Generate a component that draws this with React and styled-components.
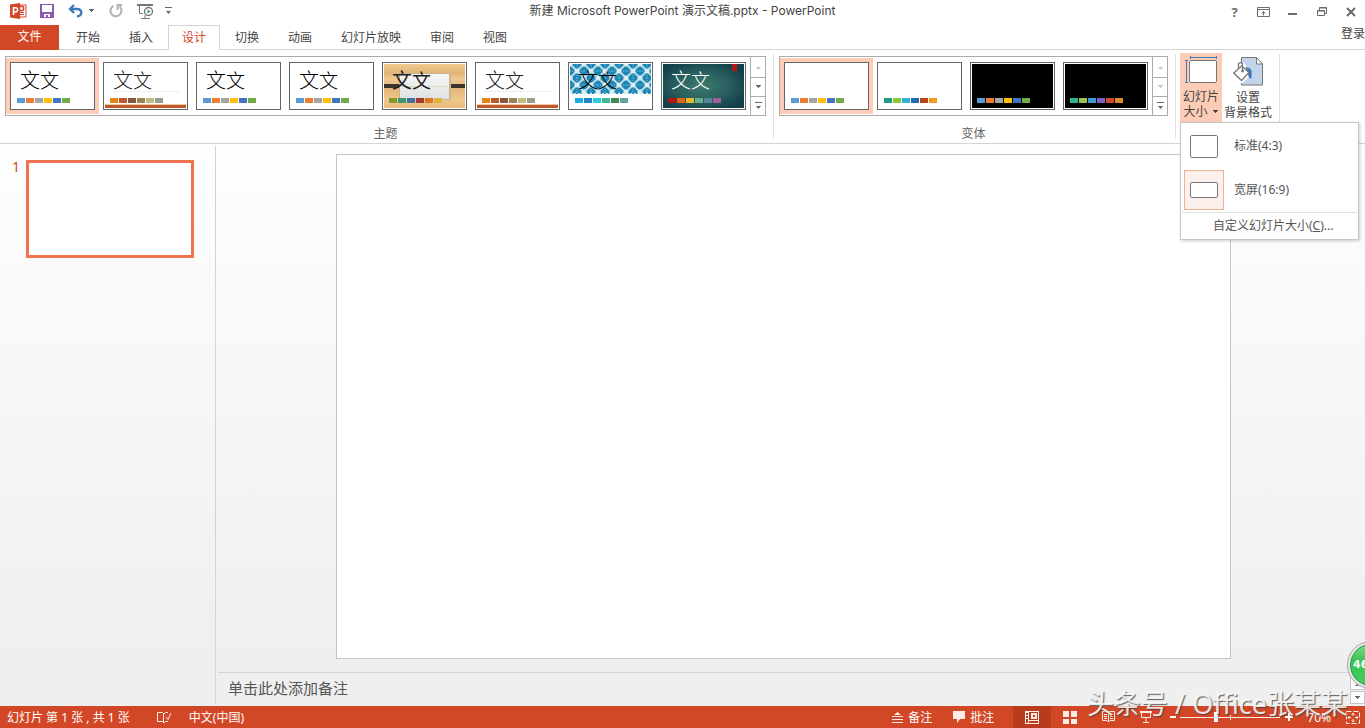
import React from "react";
import styled, { createGlobalStyle, css } from "styled-components";

const Global = createGlobalStyle`
  * { box-sizing: border-box; }
  html, body { margin: 0; overflow: hidden; background: #fff; }
  body, button, input, textarea {
    font-family: "Noto Sans", "Noto Sans CJK SC", sans-serif;
    font-size: 12px;
    color: #444;
  }
  button {
    border: 0;
    padding: 0;
    margin: 0;
    background: none;
    white-space: nowrap;
  }
  svg { display: block; flex: none; }
`;

const accent = "#d24726";
const peach = "#fcccb6";

const Window = styled.div`
  position: relative;
  display: flex;
  flex-direction: column;
  height: 100vh;
  overflow: hidden;
  background: #fff;
`;

/* ---------- title bar ---------- */

const TitleBar = styled.header`
  display: grid;
  grid-template-columns: 1fr auto 1fr;
  align-items: start;
  height: 25px;
`;

const QuickAccess = styled.div`
  display: flex;
  align-items: center;
  height: 22px;
  padding-left: 10px;
`;

const QuickButton = styled.button`
  display: flex;
  align-items: center;
  margin-right: ${(p) => p.$gap || 14}px;
  color: #666;
`;

const WindowTitle = styled.h1`
  margin: 0;
  font-family: Inter, "Noto Sans CJK SC", sans-serif;
  font-size: 12px;
  font-weight: 400;
  line-height: 22px;
  white-space: nowrap;
`;

const WindowControls = styled.div`
  display: flex;
  justify-content: flex-end;
`;

const ControlButton = styled.button`
  display: flex;
  align-items: center;
  justify-content: center;
  width: 29px;
  height: 23px;
  color: #6a6a6a;
  font-size: 13px;
  font-weight: 700;
`;

/* ---------- tabs ---------- */

const TabBar = styled.nav`
  display: flex;
  height: 25px;
  gap: 1px;
  box-shadow: inset 0 -1px 0 #d4d4d4;
`;

const FileTab = styled.button`
  width: 59px;
  margin-right: 2px;
  padding-bottom: 3px;
  background: ${accent};
  color: #fff;
`;

const Tab = styled.button`
  padding: 0 13px 3px;
  border: 1px solid transparent;
  border-bottom: 0;
  ${(p) =>
    p.$active &&
    css`
      color: ${accent};
      background: #fff;
      border-color: #d4d4d4;
    `}
`;

const SignIn = styled.a`
  margin-left: auto;
  color: #444;
  text-decoration: none;
  line-height: 17px;
`;

/* ---------- ribbon ---------- */

const Ribbon = styled.section`
  display: flex;
  height: 94px;
  border-bottom: 1px solid #d4d4d4;
  background: #fff;
`;

const Group = styled.div`
  display: flex;
  flex-direction: column;
  align-items: center;
  margin: 4px 0;
  padding: 2px 7px 0 5px;
  border-right: 1px solid #e1e1e1;
`;

const GroupLabel = styled.span`
  margin-top: auto;
  color: #666;
  line-height: 10px;
`;

const Gallery = styled.div`
  display: flex;
  height: 60px;
  border: 1px solid #ababab;
`;

const GalleryCell = styled.button`
  width: 93px;
  height: 56px;
  margin: 1px 0;
  padding: 4px;
  background: ${(p) => (p.$selected ? peach : "transparent")};
`;

const Thumb = styled.span`
  display: block;
  width: 85px;
  height: 48px;
  padding: 1px;
  border: 1px solid #666;
  background: #fff;
`;

const Art = styled.span`
  position: relative;
  display: block;
  width: 81px;
  height: 44px;
  background: ${(p) => p.$bg || "#fff"};
`;

const ArtDrawing = styled.svg`
  position: absolute;
  inset: 0;
`;

const Sample = styled.span`
  position: relative;
  display: block;
  height: 34px;
  padding-left: 8px;
  text-align: left;
  font: ${(p) => (p.$heavy ? 400 : 300)} 20px/32px "Noto Sans CJK SC", sans-serif;
  color: ${(p) => p.$ink || "#000"};
  small { font-size: 19px; }
`;

const Swatches = styled.span`
  position: relative;
  display: flex;
  gap: 1px;
  padding-left: 5px;
`;

const Swatch = styled.span`
  width: 8px;
  height: 5px;
  background: ${(p) => p.$color};
`;

const Scroller = styled.div`
  display: grid;
  grid-template-rows: 20px 18px 18px;
  row-gap: 1px;
  width: 15px;
  border-left: 1px solid #ababab;
  background: #ababab;
`;

const ScrollButton = styled.button`
  display: flex;
  align-items: center;
  justify-content: center;
  background: #fff;
  color: ${(p) => (p.$dim ? "#c4c4c4" : "#666")};
`;

const Commands = styled.div`
  display: flex;
  margin: 4px 0;
  padding: 0 6px 0 4px;
  gap: 1px;
  border-right: 1px solid #e1e1e1;
`;

const MenuAnchor = styled.div`
  position: relative;
  margin-top: -1px;
`;

const Command = styled.button`
  display: flex;
  flex-direction: column;
  align-items: center;
  width: ${(p) => p.$width}px;
  height: 69px;
  padding-top: 3px;
  background: ${(p) => (p.$open ? peach : "transparent")};
  line-height: 15px;
`;

const CommandIcon = styled.span`
  height: 33px;
`;

const CommandLine = styled.span`
  display: flex;
  align-items: center;
  gap: 4px;
`;

const Menu = styled.div`
  position: absolute;
  top: 69px;
  left: 0;
  z-index: 5;
  width: 179px;
  padding: 3px 0 0;
  background: #fff;
  border: 1px solid #c6c6c6;
  box-shadow: 1px 1px 3px rgba(0, 0, 0, 0.2);
`;

const MenuItem = styled.button`
  display: flex;
  align-items: center;
  gap: 10px;
  width: 100%;
  height: 40px;
  margin-bottom: ${(p) => (p.$last ? 2 : 4)}px;
  padding-left: 3px;
  color: #555;
`;

const MenuIcon = styled.span`
  display: flex;
  align-items: center;
  justify-content: center;
  width: 40px;
  height: 40px;
  border: 1px solid ${(p) => (p.$selected ? "#f5b195" : "transparent")};
  background: ${(p) => (p.$selected ? "#fcf0ec" : "transparent")};
`;

const MenuLabel = styled.span`
  padding-bottom: 2px;
`;

const RatioBox = styled.span`
  width: 28px;
  height: ${(p) => p.$height}px;
  border: 1px solid #777;
  border-radius: 2px;
  background: #fff;
`;

const CustomItem = styled.button`
  display: block;
  width: calc(100% - 2px);
  height: 27px;
  margin: 0 1px;
  padding: 0 0 2px 31px;
  border-top: 1px solid #e1e1e1;
  color: #555;
  text-align: left;
`;

/* ---------- work area ---------- */

const Workspace = styled.main`
  display: flex;
  flex: 1;
  min-height: 0;
  background: linear-gradient(#fefefe, #efefef 90%);
`;

const Outline = styled.aside`
  display: flex;
  align-items: flex-start;
  width: 216px;
  margin: 2px 0;
  padding: 14px 0 0 12px;
  border-right: 1px solid #d4d4d4;
`;

const SlideNumber = styled.span`
  width: 14px;
  color: ${accent};
  font: 14px/14px "Noto Sans", sans-serif;
`;

const SlideThumb = styled.button`
  width: 168px;
  height: 98px;
  border: 3px solid #f07250;
  background: #fff;
`;

const Editor = styled.div`
  display: flex;
  flex: 1;
  flex-direction: column;
`;

const Canvas = styled.div`
  display: flex;
  flex: 1;
  padding: 10px 134px 13px 120px;
`;

const Slide = styled.div`
  flex: 1;
  border: 1px solid #c6c6c6;
  background: #fff;
`;

const Notes = styled.div`
  display: flex;
  height: 34px;
  margin-left: 2px;
  border-top: 1px solid #d4d4d4;
`;

const NotesField = styled.textarea`
  flex: 1;
  height: 33px;
  padding: 4px 10px;
  border: 0;
  outline: 0;
  resize: none;
  overflow: hidden;
  background: transparent;
  font-size: 15px;
  line-height: 22px;
  &::placeholder { color: #555; opacity: 1; }
`;

const PageArrows = styled.div`
  display: flex;
  flex-direction: column;
  justify-content: flex-end;
  gap: 1px;
  width: 15px;
  padding-bottom: 2px;
`;

const PageArrow = styled.button`
  display: flex;
  align-items: center;
  justify-content: center;
  height: 13px;
  border: 1px solid #c6c6c6;
  background: #fff;
  color: #666;
`;

/* ---------- status bar ---------- */

const StatusBar = styled.footer`
  display: flex;
  align-items: center;
  height: 22px;
  padding: 0 5px 0 7px;
  background: ${accent};
`;

const StatusItem = styled.button`
  display: flex;
  align-items: center;
  gap: 5px;
  height: 22px;
  margin-right: ${(p) => p.$after || 0}px;
  color: #fff;
`;

const StatusRight = styled.div`
  display: flex;
  align-items: center;
  margin-left: auto;
`;

const ViewButton = styled.button`
  display: flex;
  align-items: center;
  justify-content: center;
  width: 38px;
  height: 22px;
  background: ${(p) => (p.$active ? "#b83b1d" : "transparent")};
`;

const Zoom = styled.input`
  appearance: none;
  width: 100px;
  height: 16px;
  margin: 0 5px 0 4px;
  background: linear-gradient(#fdece6, #fdece6) center / 100% 1px no-repeat,
    linear-gradient(#fdece6, #fdece6) center / 1px 5px no-repeat;
  &::-webkit-slider-thumb {
    appearance: none;
    width: 4px;
    height: 10px;
    background: #fff;
  }
`;

const Watermark = styled.div`
  position: absolute;
  right: 17px;
  bottom: 4px;
  z-index: 6;
  color: rgba(255, 255, 255, 0.85);
  font: 400 27px/40px "Noto Sans", "Noto Sans CJK SC", sans-serif;
  white-space: nowrap;
  pointer-events: none;
  text-shadow: 1px 1px 1px rgba(60, 60, 60, 0.8);
`;

const Badge = styled.div`
  position: absolute;
  right: -30px;
  bottom: 39px;
  z-index: 7;
  width: 48px;
  height: 48px;
  padding-left: 3px;
  border: 3px solid #e6e6e6;
  border-radius: 50%;
  outline: 1px solid #aaa;
  outline-offset: -1px;
  background: linear-gradient(#7fdc86, #3cc254 40%, #45d05c);
  box-shadow: inset 0 0 0 1px #2c9350;
  color: #fff;
  font: 700 11px/41px "DejaVu Sans", sans-serif;
`;

/* ---------- drawings ---------- */

const Caret = ({ up, bar }) => (
  <svg width="7" height={bar ? 8 : 4} viewBox={bar ? "0 0 7 8" : "0 0 7 4"} fill="currentColor">
    {bar && <path d="M0 0h7v1H0z" />}
    <path d={up ? "M1 4h5L3.500 1z" : bar ? "M1 4h5L3.500 7z" : "M1 0h5v1H5v1H4v1H3V2H2V1H1z"} />
  </svg>
);

const PowerPointLogo = () => (
  <svg width="17" height="16" viewBox="0 0 17 16">
    <path d="M8 2h8v12H8z" fill="#fff" stroke={accent} />
    <circle cx="11.500" cy="5.500" r="2.200" fill="none" stroke={accent} strokeWidth="1.500" />
    <path d="M9 9h5v1H9zM9 11h5v1H9z" fill={accent} />
    <path d="M0 1.500 10 0v16L0 14.500z" fill={accent} />
    <path d="M3.500 12V4.800H5.600a1.900 1.900 0 0 1 0 4H3.500" fill="none" stroke="#fff" strokeWidth="1.600" />
  </svg>
);

const SaveIcon = () => (
  <svg width="14" height="14" viewBox="0 0 14 14">
    <path d="M0 0h14v14H0z" fill="#8a5bb0" />
    <path d="M2 1h10v7H2zM4 10h6v3H8v-2H6v2H4z" fill="#fff" />
  </svg>
);

const UndoIcon = () => (
  <svg width="15" height="14" viewBox="0 0 15 14" fill="none" stroke="#3f7ab8" strokeWidth="2.400">
    <path d="M6 1 2 5l4 4M2.500 5H9c6 0 5.500 7 0 7.500" />
  </svg>
);

const RedoIcon = () => (
  <svg width="14" height="14" viewBox="0 0 14 14" fill="none" stroke="#b1b1b1" strokeWidth="2">
    <path d="M4.500 1.800A5.500 5.500 0 1 0 10.500 2.500" />
    <path d="M8.500 6V1H13" />
  </svg>
);

const ShowIcon = () => (
  <svg width="17" height="15" viewBox="0 0 17 15" fill="none" stroke="#777">
    <path d="M0 1h16" strokeWidth="2" />
    <path d="M2.500 2v7.500H6M8 11v3M4 14.500h9" />
    <circle cx="11.500" cy="7.500" r="4" fill="#fff" strokeWidth="1.400" />
    <path d="M10.500 5.200v4.600l3-2.300z" fill="#3e9b79" stroke="none" />
  </svg>
);

const SizeIcon = () => (
  <svg width="33" height="28" viewBox="0 0 33 28" fill="none">
    <path d="M5 1.500h27M5.500 0v3M31.500 0v3M1.500 5v22M0 4.500h3M0 26.500h3" stroke="#3f7ab8" />
    <rect x="4.500" y="4.500" width="27" height="22" rx="1.500" fill="#fff" stroke="#777" />
  </svg>
);

const FormatIcon = () => (
  <svg width="31" height="29" viewBox="0 0 31 29" fill="none" stroke="#777">
    <path d="M8.500.5H23L29.500 7v21H8.500z" fill="#c2d4ea" />
    <path d="M23.500.5V7h6z" fill="#fff" />
    <path d="M10 7.500 17.500 16 9 24.500.5 16z" fill="#fff" stroke="#fff" strokeWidth="3" />
    <path d="M12 10c7 0 8 5 6 12-4-1-2-8-6-12z" fill="#3f7ab8" stroke="none" />
    <path d="M8.500 9 16 15.500 8.500 23.500.8 16z" fill="#fff" strokeWidth="1.300" />
    <path d="M5.500 12V7.500c0-2.500 4-2.500 4 0V14" strokeWidth="1.300" />
    <circle cx="9.500" cy="14" r="1" fill="#777" />
  </svg>
);

const RibbonIcon = () => (
  <svg width="13" height="10" viewBox="0 0 13 10" fill="none" stroke="#6a6a6a">
    <path d="M.5.5h12v9H.5zM1 2.500h11M6.500 8.500V4.500M4.500 6.500l2-2 2 2" />
  </svg>
);
const MinIcon = () => (
  <svg width="9" height="10" viewBox="0 0 9 10"><path d="M0 6h9v2H0z" fill="#6a6a6a" /></svg>
);
const RestoreIcon = () => (
  <svg width="10" height="10" viewBox="0 0 10 10" fill="none" stroke="#6a6a6a">
    <path d="M2.500 3V.5h7v6H7M2 1h8M.5 3.500h7v5h-7zM0 4h8" />
  </svg>
);
const CloseIcon = () => (
  <svg width="10" height="10" viewBox="0 0 10 10" stroke="#6a6a6a" strokeWidth="2">
    <path d="m1 1 8 8M9 1 1 9" />
  </svg>
);

const ProofIcon = () => (
  <svg width="15" height="13" viewBox="0 0 15 13" fill="none" stroke="#fdece6">
    <path d="M11 1.500H8.500L7 3 5.500 1.500h-5v9h5L7 12l1.500-1.500H11M6.500 2.500v9M9 6l2 2.500L14 2" />
  </svg>
);
const NotesIcon = () => (
  <svg width="11" height="11" viewBox="0 0 11 11" fill="#fdece6">
    <path d="M5.500 0 9 3H2zM0 4h11v1H0zM0 7h11v1H0zM0 10h11v1H0z" />
  </svg>
);
const CommentIcon = () => (
  <svg width="12" height="12" viewBox="0 0 12 12" fill="#fdece6"><path d="M0 0h12v8H7l-3 4V8H0z" /></svg>
);
const NormalIcon = () => (
  <svg width="14" height="13" viewBox="0 0 14 13" fill="#fdece6">
    <path fillRule="evenodd" d="M0 0h14v13H0zM1 2v2h2V2zM1 5v2h2V5zM1 8v4h2V8zM4 1v8h9V1zM4 10v2h9v-2z" />
    <path fillRule="evenodd" d="M6 2h6v6H6zM8 4v2h2V4z" />
  </svg>
);
const SorterIcon = () => (
  <svg width="14" height="13" viewBox="0 0 14 13" fill="#fdece6"><path d="M0 0h6v6H0zM8 0h6v6H8zM0 8h6v5H0zM8 8h6v5H8z" /></svg>
);
const ReadingIcon = () => (
  <svg width="13" height="12" viewBox="0 0 13 12" fill="none" stroke="#fdece6">
    <path d="M6.500 1.500 5 .5H.5v9H5l1.500 1.500L8 9.500h4.500v-9H8zM6.500 1v10M2 3.500h3M2 5.500h3M2 7.500h3M8 3.500h3M8 5.500h3M8 7.500h3" />
  </svg>
);
const SlideshowIcon = () => (
  <svg width="12" height="12" viewBox="0 0 12 12" fill="none" stroke="#fdece6">
    <path d="M0 1h12" strokeWidth="2" /><path d="M1.500 2v4.500h9V2M6 7v4M3 11.500h6" />
  </svg>
);
const FitIcon = () => (
  <svg width="14" height="13" viewBox="0 0 14 13" fill="none" stroke="#fdece6">
    <path d="M.5.500h13v12H.5z" strokeDasharray="5 2" />
    <path d="M7 2v3M7 8v3M2 6.500h3M9 6.500h3M5.500 3.500 7 2l1.500 1.500M5.500 9.500 7 11l1.500-1.500M3.500 5 2 6.500 3.500 8M10.500 5 12 6.500 10.500 8" />
  </svg>
);

const RetroArt = () => (
  <ArtDrawing width="81" height="44">
    <path d="M6 27h69v1H6z" fill="#eee" />
    <path d="M0 40h81v1H0z" fill="#efc79e" />
    <path d="M0 41h81v3H0z" fill="#bd582c" />
  </ArtDrawing>
);

const WoodArt = () => (
  <ArtDrawing width="81" height="44">
    <defs>
      <linearGradient id="wood" x2="0" y2="1">
        <stop offset="0" stopColor="#f0cc8e" /><stop offset=".2" stopColor="#e2b477" />
        <stop offset=".35" stopColor="#efc990" /><stop offset=".55" stopColor="#e4b579" />
        <stop offset=".8" stopColor="#efc68a" /><stop offset="1" stopColor="#e9bd80" />
      </linearGradient>
      <linearGradient id="card" x2="0" y2="1">
        <stop offset="0" stopColor="#f6f6f4" /><stop offset="1" stopColor="#dfe1e4" />
      </linearGradient>
    </defs>
    <path d="M0 0h81v44H0z" fill="url(#wood)" />
    <path d="M0 20h17v4H0zM65 20h16v4H65z" fill="#3c342c" />
    <path d="M15 9h52v27H15z" fill="#c9b48e" />
    <path d="M16 10h49v25H16z" fill="url(#card)" />
    <path d="M17 22h46v1H17z" fill="#dcdcc4" />
  </ArtDrawing>
);

const PatternArt = () => (
  <ArtDrawing width="81" height="44">
    <defs>
      <pattern id="lattice" width="14" height="14" patternUnits="userSpaceOnUse">
        <path d="M0 0h14v14H0z" fill="#1c86b4" />
        <path d="M0 0 14 14M14 0 0 14" stroke="#b9dcea" strokeWidth="2" />
        <circle cx="7" cy="7" r="2.500" fill="#dcecf3" />
        <path d="M0 0h3L0 3zM14 0v3l-3-3zM0 14v-3l3 3zM14 14h-3l3-3z" fill="#dcecf3" />
        <path d="M7 0v3M7 11v3M0 7h3M11 7h3" stroke="#7dbdd8" strokeDasharray="1 1" />
      </pattern>
    </defs>
    <path d="M0 0h81v30H0z" fill="url(#lattice)" />
    <path d="M0 29.500h81" stroke="#d8ebf4" strokeDasharray="2 2" />
  </ArtDrawing>
);

const IonArt = () => (
  <ArtDrawing width="81" height="44">
    <defs>
      <radialGradient id="ion" cx=".48" cy=".5" r=".6">
        <stop offset="0" stopColor="#3c7a70" /><stop offset=".5" stopColor="#2b625f" /><stop offset="1" stopColor="#133f4b" />
      </radialGradient>
    </defs>
    <path d="M0 0h81v44H0z" fill="url(#ion)" />
    <path d="M69 0h5v7h-5z" fill="#b31414" />
  </ArtDrawing>
);

/* ---------- data ---------- */

const office = ["#5b9bd5", "#ed7d31", "#a5a5a5", "#ffc000", "#4472c4", "#70ad47"];
const retro = ["#e48312", "#bd582c", "#865640", "#9b8357", "#c2bc80", "#94a088"];

const themes = [
  { name: "Office 主题", colors: office, selected: true },
  { name: "回顾", colors: retro, Drawing: RetroArt, ink: "#222" },
  { name: "主题 3", colors: office },
  { name: "主题 4", colors: office },
  { name: "木头类型", colors: ["#83992a", "#3c9770", "#44709d", "#a23c33", "#d97828", "#deb340"], Drawing: WoodArt, heavy: true, ink: "#222" },
  { name: "回顾 2", colors: retro, Drawing: RetroArt, ink: "#222" },
  { name: "积分", colors: ["#1cade4", "#2683c6", "#27ced7", "#42ba97", "#3e8853", "#62a39f"], Drawing: PatternArt },
  { name: "离子", colors: ["#b01513", "#ea6312", "#e6b729", "#6aac90", "#54849a", "#9e5e9b"], Drawing: IonArt, ink: "#fff" },
];

const variants = [
  { name: "变体 1", colors: office, selected: true },
  { name: "变体 2", colors: ["#1f9c7b", "#8cc63f", "#36b0cf", "#1c6fae", "#b64514", "#f09c1b"] },
  { name: "变体 3", colors: office, bg: "#000" },
  { name: "变体 4", colors: ["#2fb292", "#9bc24c", "#3f9bd0", "#7e5fc6", "#cf492c", "#db8f2c"], bg: "#000" },
];

const tabs = ["开始", "插入", "设计", "切换", "动画", "幻灯片放映", "审阅", "视图"];

function ThemeGallery({ items, sample, dimDown }) {
  return (
    <Gallery>
      {items.map(({ name, colors, selected, Drawing, bg, ink, heavy }) => (
        <GalleryCell key={name} aria-label={name} $selected={selected}>
          <Thumb>
            <Art $bg={bg}>
              {Drawing && <Drawing />}
              <Sample $ink={ink} $heavy={heavy}>
                {sample && <>文<small>文</small></>}
              </Sample>
              <Swatches>
                {colors.map((c) => <Swatch key={c} $color={c} />)}
              </Swatches>
            </Art>
          </Thumb>
        </GalleryCell>
      ))}
      <Scroller>
        <ScrollButton $dim aria-label="向上"><Caret up /></ScrollButton>
        <ScrollButton $dim={dimDown} aria-label="向下"><Caret /></ScrollButton>
        <ScrollButton aria-label="其他"><Caret bar /></ScrollButton>
      </Scroller>
    </Gallery>
  );
}

export default function App() {
  return (
    <Window>
      <Global />
      <TitleBar>
        <QuickAccess>
          <QuickButton aria-label="PowerPoint" $gap={13}><PowerPointLogo /></QuickButton>
          <QuickButton aria-label="保存"><SaveIcon /></QuickButton>
          <QuickButton aria-label="撤消" $gap={5}><UndoIcon /></QuickButton>
          <QuickButton aria-label="撤消列表"><Caret /></QuickButton>
          <QuickButton aria-label="重复"><RedoIcon /></QuickButton>
          <QuickButton aria-label="从头开始" $gap={11}><ShowIcon /></QuickButton>
          <QuickButton aria-label="自定义快速访问工具栏"><Caret bar /></QuickButton>
        </QuickAccess>
        <WindowTitle>新建 Microsoft PowerPoint 演示文稿.pptx - PowerPoint</WindowTitle>
        <WindowControls>
          <ControlButton>?</ControlButton>
          <ControlButton aria-label="功能区显示选项"><RibbonIcon /></ControlButton>
          <ControlButton aria-label="最小化"><MinIcon /></ControlButton>
          <ControlButton aria-label="还原"><RestoreIcon /></ControlButton>
          <ControlButton aria-label="关闭"><CloseIcon /></ControlButton>
        </WindowControls>
      </TitleBar>

      <TabBar>
        <FileTab>文件</FileTab>
        {tabs.map((t) => <Tab key={t} $active={t === "设计"}>{t}</Tab>)}
        <SignIn href="#">登录</SignIn>
      </TabBar>

      <Ribbon>
        <Group>
          <ThemeGallery items={themes} sample />
          <GroupLabel>主题</GroupLabel>
        </Group>
        <Group>
          <ThemeGallery items={variants} dimDown />
          <GroupLabel>变体</GroupLabel>
        </Group>
        <Commands>
          <MenuAnchor>
            <Command $width={42} $open>
              <CommandIcon><SizeIcon /></CommandIcon>
              <span>幻灯片</span>
              <CommandLine>大小 <Caret /></CommandLine>
            </Command>
            <Menu>
              <MenuItem>
                <MenuIcon><RatioBox $height={23} /></MenuIcon>
                <MenuLabel>标准(4:3)</MenuLabel>
              </MenuItem>
              <MenuItem $last>
                <MenuIcon $selected><RatioBox $height={16} /></MenuIcon>
                <MenuLabel>宽屏(16:9)</MenuLabel>
              </MenuItem>
              <CustomItem>自定义幻灯片大小(<u>C</u>)...</CustomItem>
            </Menu>
          </MenuAnchor>
          <Command $width={50}>
            <CommandIcon><FormatIcon /></CommandIcon>
            <span>设置</span>
            <span>背景格式</span>
          </Command>
        </Commands>
      </Ribbon>

      <Workspace>
        <Outline>
          <SlideNumber>1</SlideNumber>
          <SlideThumb aria-label="幻灯片 1" />
        </Outline>
        <Editor>
          <Canvas><Slide /></Canvas>
          <Notes>
            <NotesField aria-label="备注" placeholder="单击此处添加备注" />
            <PageArrows>
              <PageArrow aria-label="上一张"><Caret up /></PageArrow>
              <PageArrow aria-label="下一张"><Caret /></PageArrow>
            </PageArrows>
          </Notes>
        </Editor>
      </Workspace>

      <StatusBar>
        <StatusItem $after={27}>幻灯片 第 1 张 , 共 1 张</StatusItem>
        <StatusItem $after={17} aria-label="拼写检查"><ProofIcon /></StatusItem>
        <StatusItem>中文(中国)</StatusItem>
        <StatusRight>
          <StatusItem $after={21}><NotesIcon />备注</StatusItem>
          <StatusItem $after={19}><CommentIcon />批注</StatusItem>
          <ViewButton $active aria-label="普通视图"><NormalIcon /></ViewButton>
          <ViewButton aria-label="幻灯片浏览"><SorterIcon /></ViewButton>
          <ViewButton aria-label="阅读视图"><ReadingIcon /></ViewButton>
          <ViewButton aria-label="幻灯片放映"><SlideshowIcon /></ViewButton>
          <StatusItem aria-label="缩小">
            <svg width="11" height="10" viewBox="0 0 11 10" fill="#fff"><path d="M5 4h6v2H5z" /></svg>
          </StatusItem>
          <Zoom type="range" min="10" max="180" defaultValue="70" aria-label="显示比例" />
          <StatusItem aria-label="放大" $after={14}>
            <svg width="8" height="8" viewBox="0 0 8 8" fill="#fff"><path d="M0 3h8v2H0zM3 0h2v8H3z" /></svg>
          </StatusItem>
          <StatusItem $after={15}>70%</StatusItem>
          <StatusItem aria-label="适应窗口"><FitIcon /></StatusItem>
        </StatusRight>
      </StatusBar>

      <Watermark>头条号 / Office张某某</Watermark>
      <Badge>46</Badge>
    </Window>
  );
}
